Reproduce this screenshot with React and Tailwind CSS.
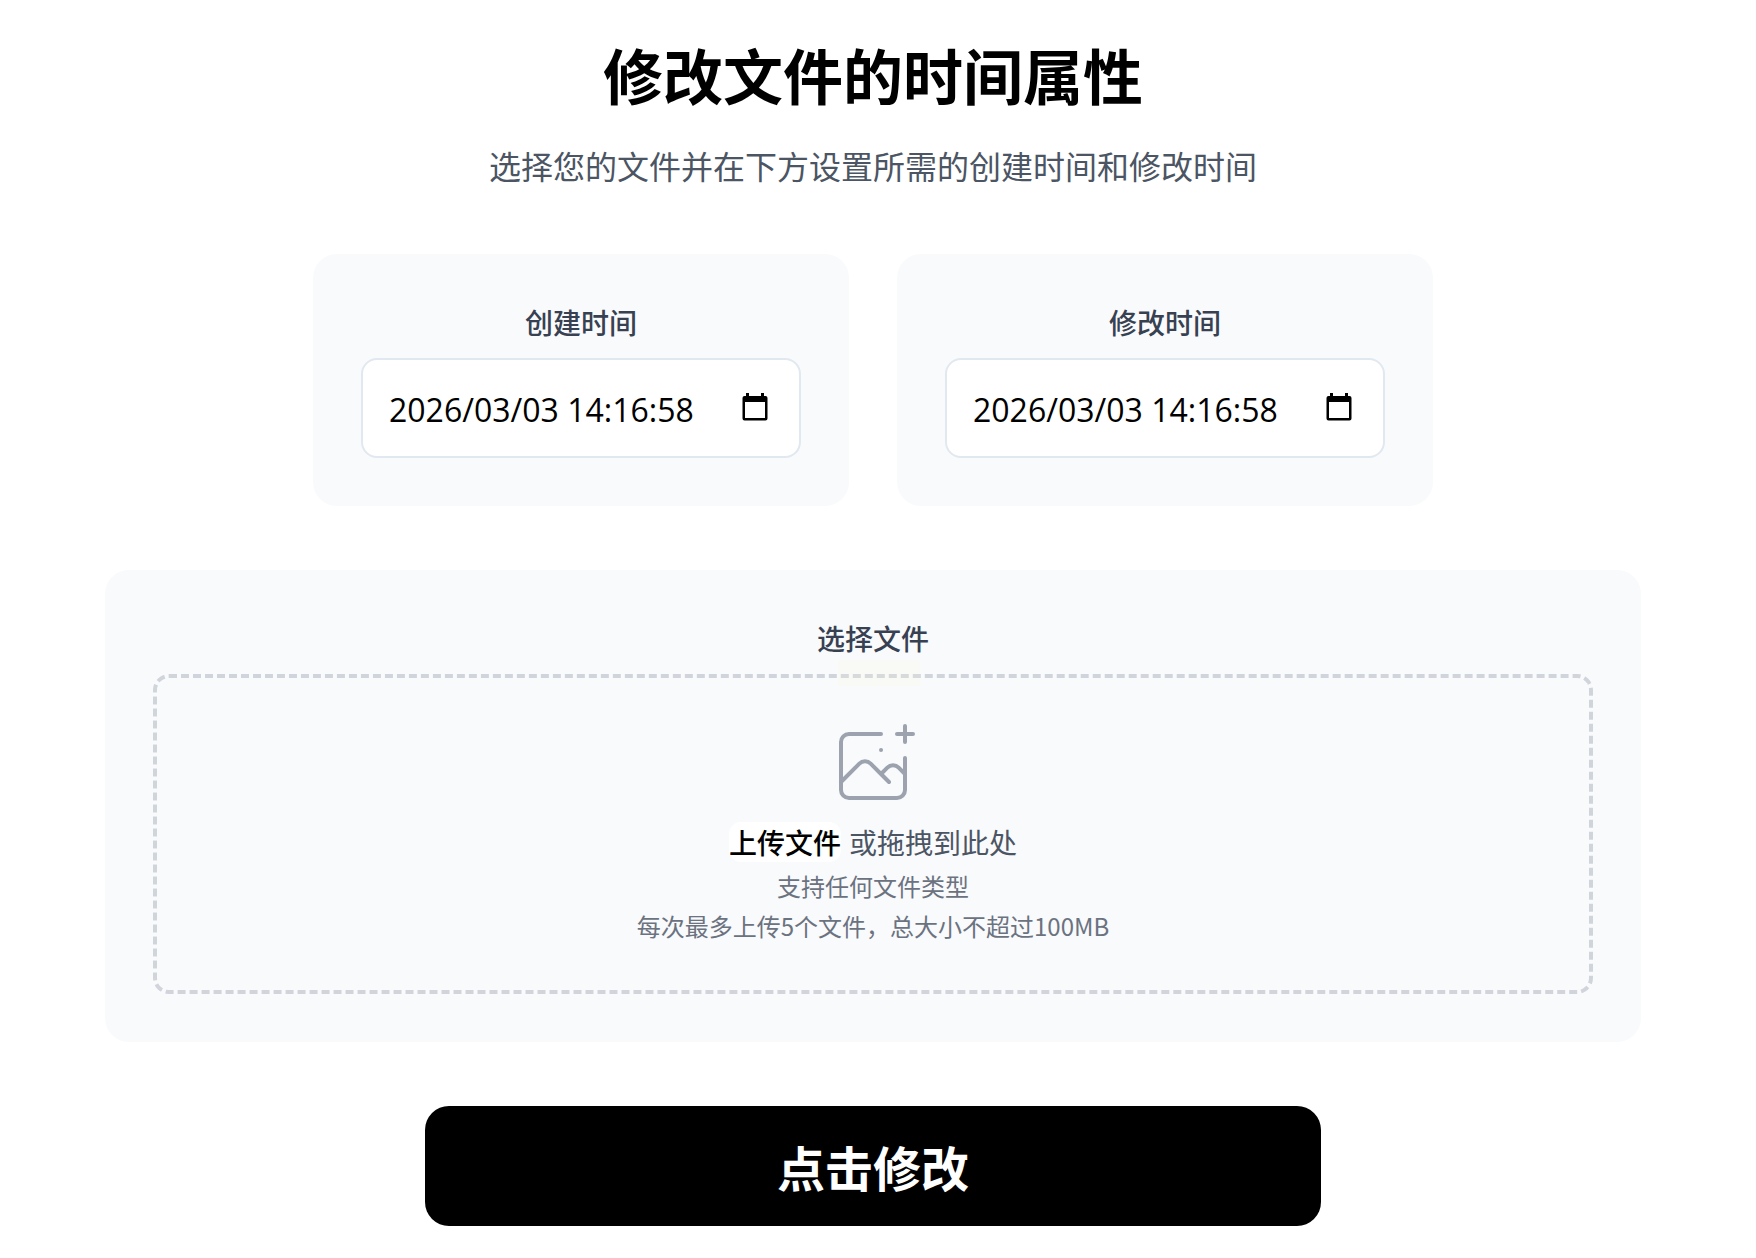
import { useState } from "react";

function CalendarIcon() {
  return (
    <svg className="size-8" viewBox="0 0 32 32" fill="currentColor" aria-hidden="true">
      <path
        fillRule="evenodd"
        d="M7 1h3v3h12V1h3v3h1.500a2 2 0 0 1 2 2v20.500a2 2 0 0 1-2 2h-21a2 2 0 0 1-2-2V6a2 2 0 0 1 2-2H7zM6 10v16h20V10z"
      />
    </svg>
  );
}

function PhotoPlusIcon() {
  return (
    <svg
      className="mx-auto size-24 text-[#9ca3af]"
      viewBox="0 0 48 48"
      fill="none"
      stroke="currentColor"
      strokeWidth="2"
      strokeLinecap="round"
      strokeLinejoin="round"
      aria-hidden="true"
    >
      <path d="M28 8H12a4 4 0 00-4 4v20m32-12v8m0 0v8a4 4 0 01-4 4H12a4 4 0 01-4-4v-4m32-4l-3.172-3.172a4 4 0 00-5.656 0L28 28M8 32l9.172-9.172a4 4 0 015.656 0L28 28m0 0l4 4m4-24h8m-4-4v8m-12 4h.02" />
    </svg>
  );
}

function TimeCard({ id, label }) {
  const [value, setValue] = useState("2026/03/03 14:16:58");
  return (
    <div className="min-w-0 flex-1 rounded-3xl bg-[#f9fafc] p-12">
      <label htmlFor={id} className="mb-4 block text-center text-[28px] leading-10 font-medium text-[#374151]">
        {label}
      </label>
      <div className="flex items-center rounded-2xl border-2 border-[#e2e8f0] bg-white pt-[26px] pr-7 pb-[22px] pl-[26px]">
        <input
          id={id}
          type="text"
          value={value}
          onChange={(e) => setValue(e.target.value)}
          className="h-12 w-full min-w-0 flex-1 bg-transparent font-['Open_Sans','Noto_Sans_CJK_SC',sans-serif] text-[32px] text-black outline-none"
        />
        <button type="button" aria-label={label} className="-mt-1 shrink-0 text-black">
          <CalendarIcon />
        </button>
      </div>
    </div>
  );
}

export default function App() {
  return (
    <main className="bg-white pt-11 pr-[10px] pb-8 font-['Noto_Sans_CJK_SC',sans-serif]" lang="zh-CN">
      <h1 className="text-center text-6xl leading-[60px] font-bold text-black">修改文件的时间属性</h1>
      <p className="mt-8 text-center text-[32px] leading-[58px] text-[#4b5563]">
        选择您的文件并在下方设置所需的创建时间和修改时间
      </p>

      <form className="mt-[60px]" onSubmit={(e) => e.preventDefault()}>
        <div className="mx-auto flex max-w-[1120px] gap-12">
          <TimeCard id="created" label="创建时间" />
          <TimeCard id="modified" label="修改时间" />
        </div>

        <section className="mx-auto mt-16 max-w-[1536px] rounded-3xl bg-[#f9fafc] p-12">
          <label htmlFor="files" className="block text-center text-[28px] leading-10 font-medium text-[#374151]">
            选择文件
          </label>
          <div className="relative mt-4 flex flex-col gap-2 rounded-2xl border-4 border-dashed border-[#d1d5db] pt-10 pb-12 text-center">
            <div className="absolute -top-[18px] left-1/2 ml-1.5 h-[26px] w-[82px] -translate-x-1/2 bg-[#f7f6d8]/15" />
            <PhotoPlusIcon />
            <p className="flex justify-center gap-2 text-[28px] leading-10 text-[#4b5563]">
              <label htmlFor="files" className="cursor-pointer rounded-xl bg-white font-medium text-black">
                上传文件
              </label>
              <input id="files" type="file" multiple className="sr-only" />
              <span>或拖拽到此处</span>
            </p>
            <p className="text-2xl leading-8 text-[#6b7280]">支持任何文件类型</p>
            <p className="text-2xl leading-8 text-[#6b7280]">每次最多上传5个文件，总大小不超过100MB</p>
          </div>
        </section>

        <button
          type="submit"
          className="mx-auto mt-16 block h-[120px] w-full max-w-4xl rounded-3xl bg-black text-5xl font-bold text-white"
        >
          点击修改
        </button>
      </form>
    </main>
  );
}
